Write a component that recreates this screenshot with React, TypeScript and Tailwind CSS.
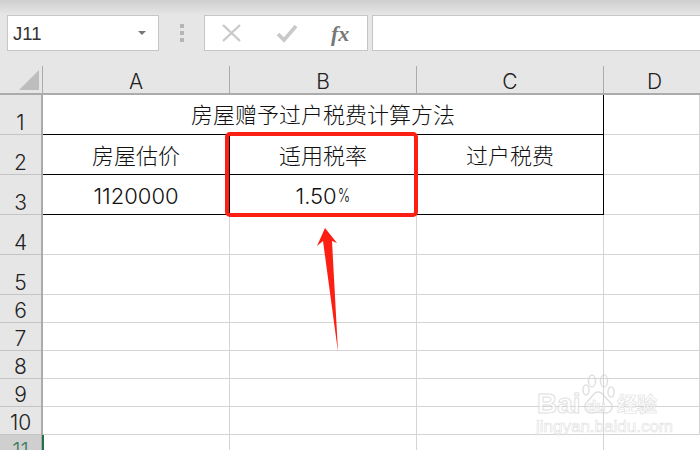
const rows = [
  { n: '1', h: 'h-10' },
  { n: '2', h: 'h-10' },
  { n: '3', h: 'h-10' },
  { n: '4', h: 'h-10' },
  { n: '5', h: 'h-10' },
  { n: '6', h: 'h-7' },
  { n: '7', h: 'h-7' },
  { n: '8', h: 'h-7' },
  { n: '9', h: 'h-7' },
  { n: '10', h: 'h-7' },
]

const cols = [
  { name: 'A', w: 'w-[187px]' },
  { name: 'B', w: 'w-[187px]' },
  { name: 'C', w: 'w-[187px]' },
  { name: 'D', w: 'w-[102px]' },
]

const font = "font-['Liberation_Sans','Noto_Sans_CJK_SC',sans-serif]"
const cellFont = "font-['Inter','Noto_Sans_CJK_SC',sans-serif] font-light text-[22px] text-[#111]"

function Cell({ w, children, border }: { w: string; children?: React.ReactNode; border: string }) {
  return (
    <div className={`${w} h-full shrink-0 flex items-center justify-center pt-1 ${cellFont} ${border}`}>
      {children}
    </div>
  )
}

const grid = 'border-r border-b border-[#d4d4d4]'
const ink = 'border-r border-b border-black'

export default function App() {
  return (
    <div className={`relative w-[700px] h-[450px] overflow-hidden bg-[#e6e6e6] ${font}`}>
      {/* Formula bar */}
      <div className="h-[15px] bg-gradient-to-b from-[#cfcfcf] to-[#e6e6e6]" />
      <div className="h-9 flex">
        <div className="ml-[7px] w-[152px] flex items-center justify-between bg-white border border-[#c6c6c6] pl-[5px] pr-3">
          <span className="text-[18.5px] text-[#333] pt-0.5">J11</span>
          <span className="w-0 h-0 border-x-[4px] border-x-transparent border-t-[4px] border-t-[#777]" />
        </div>
        <div className="w-[45px] flex flex-col items-center justify-center gap-[3px]">
          <span className="w-1 h-1 bg-[#b5b5b5]" />
          <span className="w-1 h-1 bg-[#b5b5b5]" />
          <span className="w-1 h-1 bg-[#b5b5b5]" />
        </div>
        <div className="w-[164px] flex items-center bg-white border border-[#c6c6c6]">
          <svg width="130" height="34" viewBox="0 0 130 34" fill="none" className="shrink-0">
            <path d="M18 9 L35 25 M35 9 L18 25" stroke="#c9c9c9" strokeWidth="2.4" />
            <path d="M73 18 L79 24 L91 10" stroke="#c9c9c9" strokeWidth="3.6" />
          </svg>
          <span className="font-['Liberation_Serif',serif] italic font-bold text-[22px] text-[#777] -ml-1">fx</span>
        </div>
        <div className="ml-[4px] flex-1 bg-white border border-[#c6c6c6] border-r-0" />
      </div>
      <div className="h-[15px]" />

      {/* Column header */}
      <div className="h-[29px] flex border-b-2 border-[#ababab]">
        <div className="w-[43px] shrink-0 relative border-r border-[#ababab]">
          <span className="absolute right-[3px] bottom-[3px] w-0 h-0 border-l-[20px] border-l-transparent border-b-[20px] border-b-[#bdbdbd]" />
        </div>
        {cols.map((c) => (
          <div
            key={c.name}
            className={`${c.w} shrink-0 flex items-center justify-center text-[21px] text-[#222] border-r border-[#ababab] font-['Inter',sans-serif] font-light pt-1`}
          >
            {c.name}
          </div>
        ))}
      </div>

      {/* Sheet */}
      <div className="flex">
        <div className="w-[43px] shrink-0 border-r-2 border-[#ababab]">
          {rows.map((r) => (
            <div
              key={r.n}
              className={`${r.h} flex items-end justify-center text-[21px] leading-[22px] text-[#222] border-b border-[#c4c4c4] font-['Inter',sans-serif] font-light`}
            >
              {r.n}
            </div>
          ))}
          <div className="h-4 bg-[#cfcfcf] flex justify-center text-[21px] leading-[32px] text-[#3f7f62] font-['Inter',sans-serif] font-light overflow-hidden">
            11
          </div>
        </div>
        <div className="flex-1 bg-white">
          <div className="h-10 flex">
            <div className={`w-[561px] h-full flex items-center justify-center pt-0.5 ${cellFont} ${ink}`}>
              房屋赠予过户税费计算方法
            </div>
            <div className={`flex-1 ${grid}`} />
          </div>
          <div className="h-10 flex">
            <Cell w="w-[187px]" border={ink}>房屋估价</Cell>
            <Cell w="w-[187px]" border={ink}>适用税率</Cell>
            <Cell w="w-[187px]" border={ink}>过户税费</Cell>
            <div className={`flex-1 ${grid}`} />
          </div>
          <div className="h-10 flex">
            <Cell w="w-[187px]" border={ink}>1120000</Cell>
            <Cell w="w-[187px]" border={ink}>
              1.50<span className="inline-block text-[19px] scale-x-[0.7] -mx-[2px]">%</span>
            </Cell>
            <Cell w="w-[187px]" border={ink} />
            <div className={`flex-1 ${grid}`} />
          </div>
          {rows.slice(3).map((r) => (
            <div key={r.n} className={`${r.h} flex`}>
              <Cell w="w-[187px]" border={grid} />
              <Cell w="w-[187px]" border={grid} />
              <Cell w="w-[187px]" border={grid} />
              <div className={`flex-1 ${grid}`} />
            </div>
          ))}
          <div className="h-4 flex">
            <Cell w="w-[187px]" border={grid} />
            <Cell w="w-[187px]" border={grid} />
            <Cell w="w-[187px]" border={grid} />
          </div>
        </div>
      </div>
      <div className="absolute left-[42px] top-[435px] w-0.5 h-[15px] bg-[#217346]" />

      {/* Annotation */}
      <div className="absolute left-[225px] top-[132px] w-[193px] h-[85px] border-[4px] border-[#fb1f14] rounded-[5px]" />
      <svg className="absolute left-[310px] top-[222px]" width="40" height="135" viewBox="310 222 40 135">
        <polygon points="325,228 337,243 332,241 338,352 323,241 317,246" fill="#fb1f14" />
      </svg>

      {/* Watermark */}
      <div className="absolute left-[535px] top-[372px] w-[130px] h-[64px] opacity-70">
        <svg className="absolute left-[47px] top-[2px]" width="34" height="40" viewBox="0 0 34 40" fill="none" stroke="#d4d4d4" strokeWidth="1.5">
          <ellipse cx="10" cy="7" rx="3.5" ry="6" />
          <ellipse cx="22" cy="7" rx="3.5" ry="6" />
          <ellipse cx="4" cy="16" rx="3" ry="5" />
          <ellipse cx="29" cy="18" rx="3" ry="5" />
          <path d="M16 18 C11 18 10 24 5 28 C1 32 3 39 10 39 C14 38 19 38 23 39 C30 39 32 32 28 28 C23 24 21 18 16 18 Z" />
        </svg>
        <span className="absolute left-[2px] top-[17px] text-[28px] leading-[30px] font-bold text-white [-webkit-text-stroke:1px_#d4d4d4]">Bai</span>
        <span className="absolute left-[52px] top-[26px] text-[15px] leading-4 font-bold text-white [-webkit-text-stroke:0.7px_#d4d4d4]">du</span>
        <span className="absolute left-[82px] top-[17px] text-[20px] leading-[30px] font-bold text-white [-webkit-text-stroke:0.7px_#d4d4d4] font-['Noto_Sans_CJK_SC',sans-serif]">经验</span>
        <span className="absolute left-px top-[46px] text-[17px] leading-[18px] text-white [-webkit-text-stroke:0.6px_#d4d4d4]">jingyan.baidu.com</span>
      </div>
    </div>
  )
}
